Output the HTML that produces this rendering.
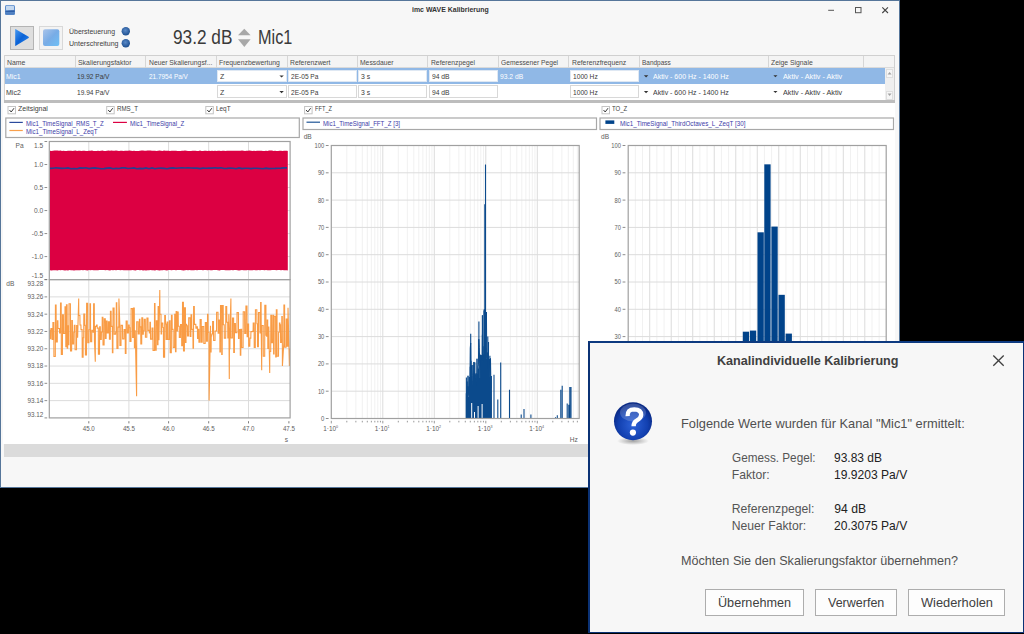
<!DOCTYPE html>
<html><head><meta charset="utf-8"><style>
html,body{margin:0;padding:0;}
body{width:1024px;height:634px;background:#000;position:relative;overflow:hidden;font-family:"Liberation Sans",sans-serif;}
.t{position:absolute;white-space:nowrap;line-height:1;transform-origin:0 0;}
.b{position:absolute;box-sizing:border-box;}
#win{position:absolute;left:0;top:0;width:900px;height:488px;background:#f7f7f7;border:1px solid #56769a;box-sizing:border-box;}
svg text{font-family:"Liberation Sans",sans-serif;}
</style></head><body>
<div id="win"></div>
<div class="b" style="left:3px;top:103px;width:892px;height:341px;background:#fff;"></div>
<div class="b" style="left:4px;top:444.3px;width:891px;height:12.8px;background:#dbdbdb;"></div>
<div class="b" style="left:4.30px;top:55.00px;width:890.40px;height:13.00px;background:#f4f4f4;border-top:1px solid #d0d0d0;border-bottom:1px solid #dadada;"></div>
<div class="b" style="left:74.70px;top:56.00px;width:1.00px;height:12.00px;background:#d6d6d6;"></div>
<div class="b" style="left:145.30px;top:56.00px;width:1.00px;height:12.00px;background:#d6d6d6;"></div>
<div class="b" style="left:215.70px;top:56.00px;width:1.00px;height:12.00px;background:#d6d6d6;"></div>
<div class="b" style="left:286.50px;top:56.00px;width:1.00px;height:12.00px;background:#d6d6d6;"></div>
<div class="b" style="left:356.50px;top:56.00px;width:1.00px;height:12.00px;background:#d6d6d6;"></div>
<div class="b" style="left:427.10px;top:56.00px;width:1.00px;height:12.00px;background:#d6d6d6;"></div>
<div class="b" style="left:497.50px;top:56.00px;width:1.00px;height:12.00px;background:#d6d6d6;"></div>
<div class="b" style="left:568.30px;top:56.00px;width:1.00px;height:12.00px;background:#d6d6d6;"></div>
<div class="b" style="left:639.00px;top:56.00px;width:1.00px;height:12.00px;background:#d6d6d6;"></div>
<div class="b" style="left:768.10px;top:56.00px;width:1.00px;height:12.00px;background:#d6d6d6;"></div>
<div class="b" style="left:862.80px;top:56.00px;width:1.00px;height:12.00px;background:#d6d6d6;"></div>
<div class="b" style="left:4.00px;top:55.00px;width:1.00px;height:45.00px;background:#d4d4d4;"></div>
<div class="b" style="left:894.00px;top:55.00px;width:1.00px;height:45.00px;background:#d0d0d0;"></div>
<div class="b" style="left:5.30px;top:68.00px;width:880.00px;height:15.80px;background:#90b8e6;"></div>
<div class="b" style="left:5.30px;top:83.80px;width:880.00px;height:16.20px;background:#ffffff;"></div>
<div class="b" style="left:4.30px;top:99.80px;width:890.60px;height:3.40px;background:#bdbdbd;"></div>
<div class="b" style="left:885.30px;top:68.00px;width:8.60px;height:31.80px;background:#efefef;"></div>
<div class="b" style="left:885.80px;top:68.50px;width:7.60px;height:9.00px;background:#f6f6f6;border:0.5px solid #dedede;"></div>
<div class="b" style="left:885.80px;top:90.50px;width:7.60px;height:9.00px;background:#f6f6f6;border:0.5px solid #dedede;"></div>
<div class="b" style="left:217.40px;top:69.70px;width:69.20px;height:12.40px;background:#fff;border:1px solid #dfe8f3;box-sizing:border-box;"></div>
<div class="b" style="left:217.40px;top:85.30px;width:69.20px;height:12.40px;background:#fff;border:1px solid #d8d8d8;box-sizing:border-box;"></div>
<div class="b" style="left:288.20px;top:69.70px;width:68.40px;height:12.40px;background:#fff;border:1px solid #dfe8f3;box-sizing:border-box;"></div>
<div class="b" style="left:288.20px;top:85.30px;width:68.40px;height:12.40px;background:#fff;border:1px solid #d8d8d8;box-sizing:border-box;"></div>
<div class="b" style="left:358.20px;top:69.70px;width:69.00px;height:12.40px;background:#fff;border:1px solid #dfe8f3;box-sizing:border-box;"></div>
<div class="b" style="left:358.20px;top:85.30px;width:69.00px;height:12.40px;background:#fff;border:1px solid #d8d8d8;box-sizing:border-box;"></div>
<div class="b" style="left:428.80px;top:69.70px;width:68.80px;height:12.40px;background:#fff;border:1px solid #dfe8f3;box-sizing:border-box;"></div>
<div class="b" style="left:428.80px;top:85.30px;width:68.80px;height:12.40px;background:#fff;border:1px solid #d8d8d8;box-sizing:border-box;"></div>
<div class="b" style="left:570.00px;top:69.70px;width:69.10px;height:12.40px;background:#fff;border:1px solid #dfe8f3;box-sizing:border-box;"></div>
<div class="b" style="left:570.00px;top:85.30px;width:69.10px;height:12.40px;background:#fff;border:1px solid #d8d8d8;box-sizing:border-box;"></div>
<svg width="1024" height="634" style="position:absolute;left:0;top:0">
<!-- app icon -->
<rect x="5" y="5" width="10" height="10" rx="1.6" fill="#5b8ccc"/>
<rect x="6" y="5.8" width="8" height="4.4" rx="0.8" fill="#c4d8ef"/>
<path d="M5.3 11.2 Q9 10.2 14.7 10.6 L14.7 11.8 L5.3 11.8 Z" fill="#1f4f9a"/>
<rect x="5.5" y="12.3" width="9" height="2.2" fill="#4f7fc0"/>
<!-- window controls -->
<line x1="828.2" y1="10.3" x2="834" y2="10.3" stroke="#555" stroke-width="1"/>
<rect x="855.5" y="7.5" width="5.5" height="5.2" fill="none" stroke="#555" stroke-width="1"/>
<path d="M882.3 7.3 L888 13 M888 7.3 L882.3 13" stroke="#444" stroke-width="1.1"/>
<!-- play/stop -->
<defs>
<linearGradient id="pg" x1="0" y1="0" x2="1" y2="1"><stop offset="0" stop-color="#4a9af0"/><stop offset="0.5" stop-color="#0a62d6"/><stop offset="1" stop-color="#2f8af0"/></linearGradient>
<linearGradient id="sg" x1="0" y1="0" x2="1" y2="1"><stop offset="0" stop-color="#aac4ea"/><stop offset="0.5" stop-color="#78ace6"/><stop offset="1" stop-color="#6ec0f6"/></linearGradient>
<radialGradient id="led" cx="0.45" cy="0.4" r="0.6"><stop offset="0" stop-color="#5a8ac8"/><stop offset="1" stop-color="#1d4f90"/></radialGradient>
</defs>
<rect x="10.5" y="26.5" width="23" height="23" fill="#dedede" stroke="#b4b4b4" stroke-width="1"/>
<path d="M15.2 30 Q14.5 29 15.8 29.3 L28.6 36.8 Q29.3 37.5 28.6 38.1 L15.8 45.7 Q14.5 46 15.2 45 Z" fill="url(#pg)"/>
<rect x="39.5" y="26.5" width="23" height="23" fill="#f3f3f3" stroke="#d8d8d8" stroke-width="1"/>
<rect x="43" y="29.2" width="16.3" height="16.8" rx="2" fill="url(#sg)"/>
<circle cx="125.8" cy="31.2" r="4.2" fill="url(#led)"/>
<circle cx="125.8" cy="43.2" r="4.2" fill="url(#led)"/>
<!-- up/down arrows -->
<polygon points="238,35.3 244.3,28.8 250.6,35.3" fill="#a8a8a8"/>
<polygon points="238,39.2 250.6,39.2 244.3,47" fill="#a8a8a8"/>
<polygon points="279.4,75.4 283.8,75.4 281.6,77.6" fill="#333"/><polygon points="279.4,91.0 283.8,91.0 281.6,93.2" fill="#333"/><polygon points="643.9,75.2 648.3,75.2 646.1,77.4" fill="#333"/><polygon points="643.9,91.0 648.3,91.0 646.1,93.2" fill="#333"/><polygon points="773.4,75.2 777.5,75.2 775.4,77.2" fill="#333"/><polygon points="773.4,91.0 777.5,91.0 775.4,93.0" fill="#333"/><polygon points="887.6,74.5 889.6,72 891.6,74.5" fill="#a0a0a0"/><polygon points="887.6,93.5 889.6,96 891.6,93.5" fill="#a0a0a0"/>
<!-- checkboxes -->
<rect x="8.0" y="106.5" width="7.5" height="7.3" fill="#fff" stroke="#c4c4c4" stroke-width="1"/><path d="M9.5 110 L11.2 112 L14.0 108.2" fill="none" stroke="#3a3a3a" stroke-width="1"/>
<rect x="106.7" y="106.5" width="7.5" height="7.3" fill="#fff" stroke="#c4c4c4" stroke-width="1"/><path d="M108.2 110 L109.9 112 L112.7 108.2" fill="none" stroke="#3a3a3a" stroke-width="1"/>
<rect x="205.8" y="106.5" width="7.5" height="7.3" fill="#fff" stroke="#c4c4c4" stroke-width="1"/><path d="M207.3 110 L209.0 112 L211.8 108.2" fill="none" stroke="#3a3a3a" stroke-width="1"/>
<rect x="304.6" y="106.5" width="7.5" height="7.3" fill="#fff" stroke="#c4c4c4" stroke-width="1"/><path d="M306.1 110 L307.8 112 L310.6 108.2" fill="none" stroke="#3a3a3a" stroke-width="1"/>
<rect x="602.0" y="106.5" width="7.5" height="7.3" fill="#fff" stroke="#c4c4c4" stroke-width="1"/><path d="M603.5 110 L605.2 112 L608.0 108.2" fill="none" stroke="#3a3a3a" stroke-width="1"/>

<!-- legend boxes -->
<rect x="5.8" y="118" width="293.5" height="19.5" fill="#fff" stroke="#a8a8a8" stroke-width="1.2"/>
<rect x="303" y="118" width="293.5" height="11.5" fill="#fff" stroke="#a8a8a8" stroke-width="1.2"/>
<rect x="600" y="118" width="293.5" height="11.5" fill="#fff" stroke="#a8a8a8" stroke-width="1.2"/>
<line x1="9.4" y1="122.4" x2="22.8" y2="122.4" stroke="#2b4a9c" stroke-width="1.2"/>
<line x1="9.4" y1="130.5" x2="22.8" y2="130.5" stroke="#f9a04c" stroke-width="1.2"/>
<line x1="113" y1="122.4" x2="126.9" y2="122.4" stroke="#dc0042" stroke-width="1.2"/>
<line x1="306.5" y1="122.2" x2="320" y2="122.2" stroke="#1f5596" stroke-width="1.2"/>
<rect x="605.4" y="120.4" width="8.9" height="3.5" fill="#00438a"/>
<line x1="88.80" y1="141.50" x2="88.80" y2="417.90" stroke="#dcdcdc" stroke-width="1"/>
<line x1="128.90" y1="141.50" x2="128.90" y2="417.90" stroke="#dcdcdc" stroke-width="1"/>
<line x1="168.60" y1="141.50" x2="168.60" y2="417.90" stroke="#dcdcdc" stroke-width="1"/>
<line x1="208.70" y1="141.50" x2="208.70" y2="417.90" stroke="#dcdcdc" stroke-width="1"/>
<line x1="248.50" y1="141.50" x2="248.50" y2="417.90" stroke="#dcdcdc" stroke-width="1"/>
<line x1="49.30" y1="164.52" x2="290.10" y2="164.52" stroke="#dcdcdc" stroke-width="1"/>
<line x1="49.30" y1="187.53" x2="290.10" y2="187.53" stroke="#dcdcdc" stroke-width="1"/>
<line x1="49.30" y1="210.55" x2="290.10" y2="210.55" stroke="#dcdcdc" stroke-width="1"/>
<line x1="49.30" y1="233.57" x2="290.10" y2="233.57" stroke="#dcdcdc" stroke-width="1"/>
<line x1="49.30" y1="256.58" x2="290.10" y2="256.58" stroke="#dcdcdc" stroke-width="1"/>
<line x1="49.30" y1="296.89" x2="290.10" y2="296.89" stroke="#dcdcdc" stroke-width="1"/>
<line x1="49.30" y1="314.18" x2="290.10" y2="314.18" stroke="#dcdcdc" stroke-width="1"/>
<line x1="49.30" y1="331.46" x2="290.10" y2="331.46" stroke="#dcdcdc" stroke-width="1"/>
<line x1="49.30" y1="348.75" x2="290.10" y2="348.75" stroke="#dcdcdc" stroke-width="1"/>
<line x1="49.30" y1="366.04" x2="290.10" y2="366.04" stroke="#dcdcdc" stroke-width="1"/>
<line x1="49.30" y1="383.32" x2="290.10" y2="383.32" stroke="#dcdcdc" stroke-width="1"/>
<line x1="49.30" y1="400.61" x2="290.10" y2="400.61" stroke="#dcdcdc" stroke-width="1"/>
<polygon points="50.0,150.7 51.5,150.9 53.0,150.8 54.5,150.6 56.0,150.6 57.5,150.6 59.0,150.8 60.5,150.6 62.0,150.9 63.5,150.8 65.0,151.0 66.5,150.9 68.0,150.7 69.5,150.7 71.0,150.7 72.5,150.9 74.0,150.8 75.5,150.6 77.0,150.9 78.5,150.7 80.0,150.8 81.5,150.9 83.0,150.7 84.5,150.8 86.0,150.9 87.5,151.0 89.0,150.8 90.5,150.7 92.0,150.6 93.5,150.9 95.0,151.0 96.5,150.9 98.0,150.8 99.5,150.9 101.0,150.8 102.5,150.6 104.0,150.9 105.5,150.9 107.0,150.8 108.5,150.6 110.0,150.7 111.5,150.6 113.0,150.7 114.5,150.8 116.0,150.6 117.5,150.8 119.0,150.9 120.5,150.7 122.0,150.7 123.5,151.0 125.0,150.7 126.5,150.7 128.0,150.8 129.5,150.6 131.0,150.7 132.5,151.0 134.0,150.8 135.5,150.9 137.0,151.0 138.5,150.9 140.0,150.8 141.5,150.6 143.0,150.6 144.5,150.7 146.0,150.7 147.5,150.6 149.0,150.6 150.5,150.6 152.0,150.8 153.5,150.7 155.0,150.7 156.5,150.9 158.0,150.8 159.5,150.6 161.0,150.7 162.5,150.9 164.0,150.6 165.5,150.8 167.0,150.8 168.5,150.8 170.0,150.9 171.5,150.7 173.0,150.7 174.5,150.8 176.0,150.7 177.5,150.9 179.0,150.9 180.5,150.9 182.0,150.7 183.5,150.7 185.0,150.6 186.5,150.7 188.0,151.0 189.5,151.0 191.0,151.0 192.5,150.7 194.0,150.7 195.5,150.8 197.0,150.9 198.5,150.9 200.0,150.6 201.5,151.0 203.0,150.9 204.5,150.7 206.0,150.7 207.5,151.0 209.0,150.8 210.5,150.9 212.0,150.7 213.5,151.0 215.0,150.7 216.5,151.0 218.0,150.7 219.5,150.7 221.0,151.0 222.5,150.8 224.0,150.8 225.5,150.9 227.0,150.7 228.5,150.7 230.0,150.7 231.5,150.7 233.0,150.7 234.5,150.8 236.0,150.8 237.5,150.8 239.0,150.8 240.5,150.8 242.0,150.6 243.5,150.7 245.0,150.9 246.5,150.7 248.0,150.8 249.5,150.6 251.0,150.7 252.5,150.9 254.0,150.8 255.5,151.0 257.0,150.8 258.5,150.8 260.0,150.8 261.5,150.8 263.0,150.9 264.5,151.0 266.0,150.8 267.5,150.9 269.0,150.6 270.5,150.6 272.0,150.6 273.5,150.9 275.0,150.7 276.5,150.9 278.0,151.0 279.5,150.7 281.0,150.8 282.5,151.0 284.0,150.7 285.5,150.8 287.0,150.7 287.8,150.9 287.8,270.4 287.0,270.3 285.5,270.3 284.0,270.2 282.5,270.1 281.0,270.2 279.5,270.0 278.0,270.0 276.5,270.3 275.0,270.1 273.5,270.0 272.0,270.1 270.5,270.3 269.0,270.2 267.5,270.3 266.0,270.0 264.5,270.3 263.0,270.0 261.5,270.0 260.0,270.2 258.5,270.1 257.0,270.2 255.5,270.2 254.0,270.1 252.5,270.2 251.0,270.3 249.5,270.2 248.0,270.1 246.5,270.2 245.0,270.2 243.5,270.2 242.0,270.1 240.5,270.3 239.0,270.4 237.5,270.2 236.0,270.0 234.5,270.0 233.0,270.2 231.5,270.0 230.0,270.2 228.5,270.2 227.0,270.3 225.5,270.3 224.0,270.1 222.5,270.0 221.0,270.1 219.5,270.4 218.0,270.2 216.5,270.1 215.0,270.1 213.5,270.1 212.0,270.3 210.5,270.3 209.0,270.0 207.5,270.2 206.0,270.1 204.5,270.1 203.0,270.2 201.5,270.1 200.0,270.1 198.5,270.1 197.0,270.2 195.5,270.0 194.0,270.3 192.5,270.3 191.0,270.3 189.5,270.0 188.0,270.2 186.5,270.1 185.0,270.3 183.5,270.4 182.0,270.2 180.5,270.1 179.0,270.1 177.5,270.0 176.0,270.3 174.5,270.1 173.0,270.1 171.5,270.3 170.0,270.1 168.5,270.0 167.0,270.4 165.5,270.3 164.0,270.0 162.5,270.3 161.0,270.3 159.5,270.4 158.0,270.2 156.5,270.0 155.0,270.4 153.5,270.3 152.0,270.3 150.5,270.1 149.0,270.3 147.5,270.3 146.0,270.4 144.5,270.3 143.0,270.4 141.5,270.1 140.0,270.2 138.5,270.1 137.0,270.1 135.5,270.4 134.0,270.2 132.5,270.1 131.0,270.2 129.5,270.2 128.0,270.3 126.5,270.2 125.0,270.3 123.5,270.3 122.0,270.0 120.5,270.2 119.0,270.1 117.5,270.0 116.0,270.2 114.5,270.1 113.0,270.3 111.5,270.1 110.0,270.4 108.5,270.2 107.0,270.1 105.5,270.3 104.0,270.0 102.5,270.1 101.0,270.1 99.5,270.0 98.0,270.2 96.5,270.2 95.0,270.3 93.5,270.2 92.0,270.1 90.5,270.2 89.0,270.1 87.5,270.4 86.0,270.3 84.5,270.0 83.0,270.2 81.5,270.1 80.0,270.3 78.5,270.2 77.0,270.2 75.5,270.3 74.0,270.4 72.5,270.3 71.0,270.2 69.5,270.1 68.0,270.4 66.5,270.3 65.0,270.4 63.5,270.2 62.0,270.0 60.5,270.3 59.0,270.1 57.5,270.4 56.0,270.2 54.5,270.2 53.0,270.3 51.5,270.4 50.0,270.3" fill="#dc0042"/>
<polyline fill="none" stroke="#283f90" stroke-width="1.6" points="50.0,168.4 53.0,168.2 56.0,167.8 59.0,168.1 62.0,168.4 65.0,168.3 68.0,167.9 71.0,168.8 74.0,168.6 77.0,168.8 80.0,167.9 83.0,168.1 86.0,167.8 89.0,168.6 92.0,168.1 95.0,167.9 98.0,168.2 101.0,168.7 104.0,168.6 107.0,168.1 110.0,167.9 113.0,168.7 116.0,168.4 119.0,168.5 122.0,167.9 125.0,167.9 128.0,168.5 131.0,168.2 134.0,167.9 137.0,168.7 140.0,168.4 143.0,168.6 146.0,167.9 149.0,168.7 152.0,167.9 155.0,168.7 158.0,168.3 161.0,168.1 164.0,168.4 167.0,168.7 170.0,168.1 173.0,167.9 176.0,168.3 179.0,168.0 182.0,167.9 185.0,168.0 188.0,167.9 191.0,168.0 194.0,168.1 197.0,168.1 200.0,168.6 203.0,168.1 206.0,168.3 209.0,168.0 212.0,168.1 215.0,167.8 218.0,168.1 221.0,167.8 224.0,168.5 227.0,168.4 230.0,168.0 233.0,168.3 236.0,168.7 239.0,167.9 242.0,168.6 245.0,168.2 248.0,168.3 251.0,168.6 254.0,168.2 257.0,168.3 260.0,168.5 263.0,168.8 266.0,168.1 269.0,168.6 272.0,168.5 275.0,168.4 278.0,168.2 281.0,168.1 284.0,167.9 287.0,167.9"/>
<polyline fill="none" stroke="#f99c45" stroke-width="1.1" points="50.00,329.73 50.12,338.73 50.80,338.73 50.92,328.59 52.00,328.59 52.12,339.39 52.80,339.39 52.92,322.49 53.80,322.49 53.92,356.44 55.30,356.44 55.42,305.02 56.10,305.02 56.22,341.89 57.30,341.89 57.42,320.92 57.90,320.92 58.02,328.49 59.40,328.49 59.52,333.04 60.40,333.04 60.52,303.14 61.20,303.14 61.32,354.36 62.40,354.36 62.52,314.75 63.40,314.75 63.52,333.42 64.90,333.42 65.02,306.78 65.70,306.78 65.82,346.58 66.30,346.58 66.42,304.76 67.10,304.76 67.22,348.30 67.70,348.30 67.82,325.87 68.30,325.87 68.42,344.59 68.90,344.59 69.02,303.77 70.40,303.77 70.52,351.02 71.60,351.02 71.72,320.48 72.40,320.48 72.52,343.87 73.60,343.87 73.72,332.22 74.20,332.22 74.32,325.20 75.00,325.20 75.12,349.70 76.50,349.70 76.62,325.62 77.50,325.62 77.62,337.78 78.70,298.62 78.82,315.49 79.90,315.49 80.02,324.99 80.90,324.99 81.02,329.58 82.10,329.58 82.22,357.26 83.10,357.26 83.22,337.78 83.70,337.78 83.82,314.00 84.70,314.00 84.82,325.34 85.30,325.34 85.42,354.83 86.50,354.83 86.62,303.33 87.70,303.33 87.82,342.76 88.90,342.76 89.02,329.75 89.90,329.75 90.02,303.92 90.50,303.92 90.62,341.66 91.70,341.66 91.82,330.39 92.90,330.39 93.02,332.16 93.50,332.16 93.62,303.69 94.30,303.69 94.42,340.24 95.30,361.72 95.42,326.41 96.50,326.41 96.62,324.99 97.10,324.99 97.22,328.13 98.30,328.13 98.42,354.12 99.50,354.12 99.62,326.78 100.30,326.78 100.42,339.39 101.30,339.39 101.42,331.98 102.10,331.98 102.22,317.26 102.90,317.26 103.02,344.88 104.10,344.88 104.22,318.80 105.30,318.80 105.42,338.45 106.10,338.45 106.22,321.15 107.10,321.15 107.22,332.83 108.30,332.83 108.42,321.88 109.30,321.88 109.42,339.28 110.30,339.28 110.42,311.36 111.10,311.36 111.22,326.41 112.30,326.41 112.42,352.74 112.90,352.74 113.02,308.00 114.10,308.00 114.22,334.16 115.60,334.16 115.72,331.88 116.20,331.88 116.32,302.78 116.80,302.78 116.92,348.55 118.00,348.55 118.12,327.11 118.80,327.11 118.92,298.62 119.80,324.15 119.92,345.57 121.00,345.57 121.12,325.38 122.50,325.38 122.62,338.87 124.00,338.87 124.12,329.47 125.20,329.47 125.32,353.37 126.00,353.37 126.12,320.95 127.20,320.95 127.32,332.87 128.40,332.87 128.52,325.11 129.20,325.11 129.32,327.77 129.80,327.77 129.92,341.41 131.00,341.41 131.12,308.61 132.50,308.61 132.62,337.35 133.30,337.35 133.42,308.08 134.30,308.08 134.42,347.62 135.10,347.62 135.22,330.22 136.60,396.29 136.72,321.80 138.10,321.80 138.22,333.83 139.30,333.83 139.42,319.26 139.90,319.26 140.02,326.89 140.70,326.89 140.82,344.05 141.70,344.05 141.82,317.77 142.70,317.77 142.82,334.29 143.30,334.29 143.42,330.80 144.10,330.80 144.22,319.40 145.30,319.40 145.42,337.23 146.80,337.23 146.92,318.01 148.00,318.01 148.12,330.35 149.20,330.35 149.32,332.95 149.80,332.95 149.92,322.25 150.40,322.25 150.52,339.15 151.90,339.15 152.02,328.03 152.90,328.03 153.02,350.41 154.40,350.41 154.52,303.50 155.00,303.50 155.12,350.26 156.20,350.26 156.32,320.85 157.40,320.85 157.52,344.77 158.00,344.77 158.12,306.52 158.80,306.52 158.92,340.34 159.80,289.97 159.92,314.31 161.00,314.31 161.12,333.95 161.60,333.95 161.72,323.11 162.80,323.11 162.92,327.44 163.40,327.44 163.52,357.10 164.60,357.10 164.72,315.59 165.40,315.59 165.52,323.99 166.00,323.99 166.12,339.33 167.00,339.33 167.12,322.15 167.80,322.15 167.92,339.38 169.30,339.38 169.42,320.83 170.10,320.83 170.22,352.59 171.30,352.59 171.42,315.24 172.10,315.24 172.22,329.38 173.10,329.38 173.22,347.38 174.60,347.38 174.72,314.29 175.40,314.29 175.52,351.82 176.00,351.82 176.12,311.60 176.80,311.60 176.92,330.84 177.40,330.84 177.52,312.11 178.20,312.11 178.32,326.20 179.20,326.20 179.32,337.43 180.40,337.43 180.52,324.60 181.60,324.60 181.72,345.71 182.40,345.71 182.52,302.37 183.40,302.37 183.52,351.01 184.40,351.01 184.52,307.92 185.40,307.92 185.52,342.48 186.00,342.48 186.12,324.29 186.60,324.29 186.72,325.75 187.40,325.75 187.52,335.90 188.60,335.90 188.72,317.84 190.10,317.84 190.22,336.38 190.90,336.38 191.02,314.85 191.70,314.85 191.82,329.36 192.90,329.36 193.02,348.28 193.50,348.28 193.62,306.47 194.30,306.47 194.42,324.37 195.80,324.37 195.92,328.15 196.60,328.15 196.72,326.70 197.40,326.70 197.52,338.52 198.20,338.52 198.32,329.30 198.80,329.30 198.92,342.10 200.00,342.10 200.12,319.46 201.20,319.46 201.32,342.08 202.20,342.08 202.32,326.55 203.70,326.55 203.82,343.53 205.20,343.53 205.32,322.64 206.40,322.64 206.52,341.32 207.40,341.32 207.52,314.35 208.00,314.35 208.12,332.29 209.00,332.29 209.12,400.61 210.50,325.78 210.62,351.99 211.10,351.99 211.22,336.06 211.70,336.06 211.82,333.99 212.50,333.99 212.62,321.60 213.50,321.60 213.62,340.44 215.00,340.44 215.12,330.97 216.50,330.97 216.62,312.30 218.00,312.30 218.12,333.25 218.80,333.25 218.92,320.17 219.80,320.17 219.92,352.00 220.40,352.00 220.52,305.63 221.60,305.63 221.72,354.45 222.20,354.45 222.32,305.67 223.20,305.67 223.32,324.74 224.20,324.74 224.32,338.09 225.70,338.09 225.82,306.59 226.70,306.59 226.82,322.21 227.70,322.21 227.82,337.88 228.70,337.88 228.82,314.29 229.30,379.00 229.42,348.70 229.90,348.70 230.02,329.27 230.90,298.62 231.02,337.95 232.40,337.95 232.52,317.96 233.60,317.96 233.72,352.42 234.40,352.42 234.52,323.51 235.40,323.51 235.52,332.62 236.90,332.62 237.02,312.64 238.40,312.64 238.52,338.56 239.00,338.56 239.12,329.52 240.20,329.52 240.32,355.18 240.80,355.18 240.92,329.38 241.60,329.38 241.72,347.57 243.10,347.57 243.22,311.77 244.60,311.77 244.72,333.54 245.80,333.54 245.92,305.97 247.00,305.97 247.12,336.72 247.60,336.72 247.72,324.05 248.60,324.05 248.72,346.21 249.80,346.21 249.92,338.13 250.80,338.13 250.92,331.61 252.30,331.61 252.42,331.39 253.10,331.39 253.22,323.15 254.10,323.15 254.22,347.40 255.30,347.40 255.42,309.77 256.80,309.77 256.92,323.70 257.40,323.70 257.52,346.62 258.40,346.62 258.52,312.47 259.90,312.47 260.02,333.00 260.50,333.00 260.62,302.64 261.10,302.64 261.22,332.23 261.70,370.36 261.82,325.49 263.20,325.49 263.32,356.25 264.70,356.25 264.82,305.39 265.90,305.39 266.02,335.13 266.50,335.13 266.62,336.25 267.10,336.25 267.22,319.94 267.70,319.94 267.82,348.53 268.70,348.53 268.82,326.62 269.70,372.95 269.82,351.37 270.70,351.37 270.82,315.21 271.70,315.21 271.82,342.68 272.90,342.68 273.02,315.39 273.50,315.39 273.62,353.94 274.10,353.94 274.22,316.21 275.60,316.21 275.72,356.84 276.20,356.84 276.32,309.71 277.00,309.71 277.12,356.32 278.50,356.32 278.62,332.19 279.30,332.19 279.42,322.98 279.90,322.98 280.02,324.88 280.50,324.88 280.62,342.39 281.70,342.39 281.82,316.56 282.30,316.56 282.42,366.04 283.80,343.06 283.92,304.98 284.60,304.98 284.72,347.22 286.10,347.22 286.22,318.95 286.90,318.95 287.02,346.21 287.90,346.21 288.02,307.75 289.40,366.04 289.52,348.44"/>
<rect x="49.30" y="141.50" width="240.80" height="138.10" fill="none" stroke="#a0a0a0" stroke-width="1.2"/>
<rect x="49.30" y="279.60" width="240.80" height="138.30" fill="none" stroke="#a0a0a0" stroke-width="1.2"/>
<text x="43.20" y="147.70" font-size="6.6" fill="#606060" text-anchor="end">1.5</text>
<line x1="44.50" y1="141.50" x2="47.20" y2="141.50" stroke="#707070" stroke-width="0.8"/>
<text x="43.20" y="166.92" font-size="6.6" fill="#606060" text-anchor="end">1.0</text>
<line x1="44.50" y1="164.52" x2="47.20" y2="164.52" stroke="#707070" stroke-width="0.8"/>
<text x="43.20" y="189.93" font-size="6.6" fill="#606060" text-anchor="end">0.5</text>
<line x1="44.50" y1="187.53" x2="47.20" y2="187.53" stroke="#707070" stroke-width="0.8"/>
<text x="43.20" y="212.95" font-size="6.6" fill="#606060" text-anchor="end">0.0</text>
<line x1="44.50" y1="210.55" x2="47.20" y2="210.55" stroke="#707070" stroke-width="0.8"/>
<text x="43.20" y="235.97" font-size="6.6" fill="#606060" text-anchor="end">-0.5</text>
<line x1="44.50" y1="233.57" x2="47.20" y2="233.57" stroke="#707070" stroke-width="0.8"/>
<text x="43.20" y="258.98" font-size="6.6" fill="#606060" text-anchor="end">-1.0</text>
<line x1="44.50" y1="256.58" x2="47.20" y2="256.58" stroke="#707070" stroke-width="0.8"/>
<text x="43.20" y="277.90" font-size="6.6" fill="#606060" text-anchor="end">-1.5</text>
<line x1="44.50" y1="279.60" x2="47.20" y2="279.60" stroke="#707070" stroke-width="0.8"/>
<text x="43.20" y="285.80" font-size="6.6" fill="#606060" text-anchor="end" textLength="15.8" lengthAdjust="spacingAndGlyphs">93.28</text>
<line x1="44.50" y1="279.60" x2="47.20" y2="279.60" stroke="#707070" stroke-width="0.8"/>
<text x="43.20" y="299.29" font-size="6.6" fill="#606060" text-anchor="end" textLength="15.8" lengthAdjust="spacingAndGlyphs">93.26</text>
<line x1="44.50" y1="296.89" x2="47.20" y2="296.89" stroke="#707070" stroke-width="0.8"/>
<text x="43.20" y="316.57" font-size="6.6" fill="#606060" text-anchor="end" textLength="15.8" lengthAdjust="spacingAndGlyphs">93.24</text>
<line x1="44.50" y1="314.18" x2="47.20" y2="314.18" stroke="#707070" stroke-width="0.8"/>
<text x="43.20" y="333.86" font-size="6.6" fill="#606060" text-anchor="end" textLength="15.8" lengthAdjust="spacingAndGlyphs">93.22</text>
<line x1="44.50" y1="331.46" x2="47.20" y2="331.46" stroke="#707070" stroke-width="0.8"/>
<text x="43.20" y="351.15" font-size="6.6" fill="#606060" text-anchor="end" textLength="15.8" lengthAdjust="spacingAndGlyphs">93.20</text>
<line x1="44.50" y1="348.75" x2="47.20" y2="348.75" stroke="#707070" stroke-width="0.8"/>
<text x="43.20" y="368.44" font-size="6.6" fill="#606060" text-anchor="end" textLength="15.8" lengthAdjust="spacingAndGlyphs">93.18</text>
<line x1="44.50" y1="366.04" x2="47.20" y2="366.04" stroke="#707070" stroke-width="0.8"/>
<text x="43.20" y="385.72" font-size="6.6" fill="#606060" text-anchor="end" textLength="15.8" lengthAdjust="spacingAndGlyphs">93.16</text>
<line x1="44.50" y1="383.32" x2="47.20" y2="383.32" stroke="#707070" stroke-width="0.8"/>
<text x="43.20" y="403.01" font-size="6.6" fill="#606060" text-anchor="end" textLength="15.8" lengthAdjust="spacingAndGlyphs">93.14</text>
<line x1="44.50" y1="400.61" x2="47.20" y2="400.61" stroke="#707070" stroke-width="0.8"/>
<text x="43.20" y="416.70" font-size="6.6" fill="#606060" text-anchor="end" textLength="15.8" lengthAdjust="spacingAndGlyphs">93.12</text>
<line x1="44.50" y1="417.90" x2="47.20" y2="417.90" stroke="#707070" stroke-width="0.8"/>
<text x="15.50" y="147.80" font-size="6.6" fill="#606060" text-anchor="start">Pa</text>
<text x="6.30" y="285.80" font-size="6.6" fill="#606060" text-anchor="start">dB</text>
<line x1="88.80" y1="421.20" x2="88.80" y2="423.40" stroke="#707070" stroke-width="0.9"/>
<text x="88.80" y="431.40" font-size="6.6" fill="#606060" text-anchor="middle" textLength="12" lengthAdjust="spacingAndGlyphs">45.0</text>
<line x1="128.90" y1="421.20" x2="128.90" y2="423.40" stroke="#707070" stroke-width="0.9"/>
<text x="128.90" y="431.40" font-size="6.6" fill="#606060" text-anchor="middle" textLength="12" lengthAdjust="spacingAndGlyphs">45.5</text>
<line x1="168.60" y1="421.20" x2="168.60" y2="423.40" stroke="#707070" stroke-width="0.9"/>
<text x="168.60" y="431.40" font-size="6.6" fill="#606060" text-anchor="middle" textLength="12" lengthAdjust="spacingAndGlyphs">46.0</text>
<line x1="208.70" y1="421.20" x2="208.70" y2="423.40" stroke="#707070" stroke-width="0.9"/>
<text x="208.70" y="431.40" font-size="6.6" fill="#606060" text-anchor="middle" textLength="12" lengthAdjust="spacingAndGlyphs">46.5</text>
<line x1="248.50" y1="421.20" x2="248.50" y2="423.40" stroke="#707070" stroke-width="0.9"/>
<text x="248.50" y="431.40" font-size="6.6" fill="#606060" text-anchor="middle" textLength="12" lengthAdjust="spacingAndGlyphs">47.0</text>
<line x1="288.90" y1="421.20" x2="288.90" y2="423.40" stroke="#707070" stroke-width="0.9"/>
<text x="288.90" y="431.40" font-size="6.6" fill="#606060" text-anchor="middle" textLength="12" lengthAdjust="spacingAndGlyphs">47.5</text>
<text x="286.30" y="442.20" font-size="6.6" fill="#606060" text-anchor="middle">s</text>
<line x1="346.80" y1="145.50" x2="346.80" y2="418.50" stroke="#f1f1f1" stroke-width="1"/>
<line x1="355.87" y1="145.50" x2="355.87" y2="418.50" stroke="#f1f1f1" stroke-width="1"/>
<line x1="362.31" y1="145.50" x2="362.31" y2="418.50" stroke="#f1f1f1" stroke-width="1"/>
<line x1="367.30" y1="145.50" x2="367.30" y2="418.50" stroke="#f1f1f1" stroke-width="1"/>
<line x1="371.37" y1="145.50" x2="371.37" y2="418.50" stroke="#f1f1f1" stroke-width="1"/>
<line x1="374.82" y1="145.50" x2="374.82" y2="418.50" stroke="#f1f1f1" stroke-width="1"/>
<line x1="377.81" y1="145.50" x2="377.81" y2="418.50" stroke="#f1f1f1" stroke-width="1"/>
<line x1="380.44" y1="145.50" x2="380.44" y2="418.50" stroke="#f1f1f1" stroke-width="1"/>
<line x1="398.30" y1="145.50" x2="398.30" y2="418.50" stroke="#f1f1f1" stroke-width="1"/>
<line x1="407.37" y1="145.50" x2="407.37" y2="418.50" stroke="#f1f1f1" stroke-width="1"/>
<line x1="413.81" y1="145.50" x2="413.81" y2="418.50" stroke="#f1f1f1" stroke-width="1"/>
<line x1="418.80" y1="145.50" x2="418.80" y2="418.50" stroke="#f1f1f1" stroke-width="1"/>
<line x1="422.87" y1="145.50" x2="422.87" y2="418.50" stroke="#f1f1f1" stroke-width="1"/>
<line x1="426.32" y1="145.50" x2="426.32" y2="418.50" stroke="#f1f1f1" stroke-width="1"/>
<line x1="429.31" y1="145.50" x2="429.31" y2="418.50" stroke="#f1f1f1" stroke-width="1"/>
<line x1="431.94" y1="145.50" x2="431.94" y2="418.50" stroke="#f1f1f1" stroke-width="1"/>
<line x1="449.80" y1="145.50" x2="449.80" y2="418.50" stroke="#f1f1f1" stroke-width="1"/>
<line x1="458.87" y1="145.50" x2="458.87" y2="418.50" stroke="#f1f1f1" stroke-width="1"/>
<line x1="465.31" y1="145.50" x2="465.31" y2="418.50" stroke="#f1f1f1" stroke-width="1"/>
<line x1="470.30" y1="145.50" x2="470.30" y2="418.50" stroke="#f1f1f1" stroke-width="1"/>
<line x1="474.37" y1="145.50" x2="474.37" y2="418.50" stroke="#f1f1f1" stroke-width="1"/>
<line x1="477.82" y1="145.50" x2="477.82" y2="418.50" stroke="#f1f1f1" stroke-width="1"/>
<line x1="480.81" y1="145.50" x2="480.81" y2="418.50" stroke="#f1f1f1" stroke-width="1"/>
<line x1="483.44" y1="145.50" x2="483.44" y2="418.50" stroke="#f1f1f1" stroke-width="1"/>
<line x1="501.30" y1="145.50" x2="501.30" y2="418.50" stroke="#f1f1f1" stroke-width="1"/>
<line x1="510.37" y1="145.50" x2="510.37" y2="418.50" stroke="#f1f1f1" stroke-width="1"/>
<line x1="516.81" y1="145.50" x2="516.81" y2="418.50" stroke="#f1f1f1" stroke-width="1"/>
<line x1="521.80" y1="145.50" x2="521.80" y2="418.50" stroke="#f1f1f1" stroke-width="1"/>
<line x1="525.87" y1="145.50" x2="525.87" y2="418.50" stroke="#f1f1f1" stroke-width="1"/>
<line x1="529.32" y1="145.50" x2="529.32" y2="418.50" stroke="#f1f1f1" stroke-width="1"/>
<line x1="532.31" y1="145.50" x2="532.31" y2="418.50" stroke="#f1f1f1" stroke-width="1"/>
<line x1="534.94" y1="145.50" x2="534.94" y2="418.50" stroke="#f1f1f1" stroke-width="1"/>
<line x1="552.80" y1="145.50" x2="552.80" y2="418.50" stroke="#f1f1f1" stroke-width="1"/>
<line x1="561.87" y1="145.50" x2="561.87" y2="418.50" stroke="#f1f1f1" stroke-width="1"/>
<line x1="568.31" y1="145.50" x2="568.31" y2="418.50" stroke="#f1f1f1" stroke-width="1"/>
<line x1="573.30" y1="145.50" x2="573.30" y2="418.50" stroke="#f1f1f1" stroke-width="1"/>
<line x1="577.37" y1="145.50" x2="577.37" y2="418.50" stroke="#f1f1f1" stroke-width="1"/>
<line x1="382.80" y1="145.50" x2="382.80" y2="418.50" stroke="#dcdcdc" stroke-width="1"/>
<line x1="434.30" y1="145.50" x2="434.30" y2="418.50" stroke="#dcdcdc" stroke-width="1"/>
<line x1="485.80" y1="145.50" x2="485.80" y2="418.50" stroke="#dcdcdc" stroke-width="1"/>
<line x1="537.30" y1="145.50" x2="537.30" y2="418.50" stroke="#dcdcdc" stroke-width="1"/>
<line x1="331.30" y1="391.20" x2="579.20" y2="391.20" stroke="#dcdcdc" stroke-width="1"/>
<line x1="331.30" y1="363.90" x2="579.20" y2="363.90" stroke="#dcdcdc" stroke-width="1"/>
<line x1="331.30" y1="336.60" x2="579.20" y2="336.60" stroke="#dcdcdc" stroke-width="1"/>
<line x1="331.30" y1="309.30" x2="579.20" y2="309.30" stroke="#dcdcdc" stroke-width="1"/>
<line x1="331.30" y1="282.00" x2="579.20" y2="282.00" stroke="#dcdcdc" stroke-width="1"/>
<line x1="331.30" y1="254.70" x2="579.20" y2="254.70" stroke="#dcdcdc" stroke-width="1"/>
<line x1="331.30" y1="227.40" x2="579.20" y2="227.40" stroke="#dcdcdc" stroke-width="1"/>
<line x1="331.30" y1="200.10" x2="579.20" y2="200.10" stroke="#dcdcdc" stroke-width="1"/>
<line x1="331.30" y1="172.80" x2="579.20" y2="172.80" stroke="#dcdcdc" stroke-width="1"/>
<polyline fill="none" stroke="#0b4a8c" stroke-width="1" points="466.20,399.13 466.65,399.33 467.10,381.50 467.55,403.95 468.00,375.77 468.45,390.97 468.90,395.58 469.35,377.06 469.80,400.15 470.25,348.07 470.70,343.00 471.15,381.50 471.60,365.39 472.05,375.46 472.50,400.79 472.95,364.95 473.40,386.85 473.85,361.97 474.30,393.73 474.75,362.43 475.20,394.10 475.65,397.70 476.10,373.26 476.55,388.57 477.00,358.75 477.45,396.41 477.90,366.22 478.35,364.76 478.80,339.20 479.25,347.74 479.70,363.40 480.15,390.56 480.60,354.78 481.05,388.12 481.50,355.28 481.95,391.61 482.40,315.27 482.85,361.52 483.30,354.61 483.75,371.93 484.20,310.52 484.65,377.32 485.10,376.13 485.55,339.81 486.00,357.82 486.45,312.01 486.90,376.92 487.35,352.56 487.80,388.44 488.25,358.79 488.70,389.95 489.15,376.14 489.60,359.11 490.05,391.79 490.50,358.45 490.95,387.20 491.40,387.80"/>
<path fill="none" stroke="#0b4a8c" stroke-width="1.1" d="M466.20 418.50V393.32M466.65 418.50V392.53M467.10 418.50V396.19M467.55 418.50V386.24M468.00 418.50V396.67M468.45 418.50V396.99M468.90 418.50V386.40M469.35 418.50V396.53M469.80 418.50V393.06M470.25 418.50V366.67M470.70 418.50V365.04M471.15 418.50V360.79M471.60 418.50V376.00M472.05 418.50V380.71M472.50 418.50V388.11M472.95 418.50V385.38M473.40 418.50V373.65M473.85 418.50V388.09M474.30 418.50V371.64M474.75 418.50V378.24M475.20 418.50V389.17M475.65 418.50V374.13M476.10 418.50V387.92M476.55 418.50V385.72M477.00 418.50V384.93M477.45 418.50V373.96M477.90 418.50V383.39M478.35 418.50V368.84M478.80 418.50V367.74M479.25 418.50V353.12M479.70 418.50V381.32M480.15 418.50V377.89M480.60 418.50V383.43M481.05 418.50V369.75M481.50 418.50V359.73M481.95 418.50V361.41M482.40 418.50V334.64M482.85 418.50V362.11M483.30 418.50V361.85M483.75 418.50V346.29M484.20 418.50V367.88M484.65 418.50V342.43M485.10 418.50V346.56M485.55 418.50V341.83M486.00 418.50V347.98M486.45 418.50V358.65M486.90 418.50V368.73M487.35 418.50V377.24M487.80 418.50V360.91M488.25 418.50V372.74M488.70 418.50V376.94M489.15 418.50V390.74M489.60 418.50V376.74M490.05 418.50V378.10M490.50 418.50V384.77M490.95 418.50V379.99M491.40 418.50V375.98M466.40 418.50V377.55M470.70 418.50V333.87M478.90 418.50V321.58M484.80 418.50V204.19M485.50 418.50V164.61M485.00 418.50V295.65M484.20 418.50V309.30M489.90 418.50V355.71M487.80 418.50V336.60M488.50 418.50V342.06M494.00 418.50V374.82M491.00 418.50V385.74M497.80 418.50V399.39M500.70 418.50V362.53M509.50 418.50V389.83M521.20 418.50V414.40M524.00 418.50V408.94M530.90 418.50V414.40M555.50 418.50V417.13M557.30 418.50V415.22M560.80 418.50V389.83M562.20 418.50V385.74M567.20 418.50V403.49M568.80 418.50V404.85M569.80 418.50V387.11M571.00 418.50V387.11"/>
<rect x="471.20" y="403.00" width="1.00" height="14.90" fill="#ffffff"/>
<rect x="477.60" y="406.00" width="1.00" height="11.90" fill="#ffffff"/>
<rect x="481.60" y="404.00" width="1.00" height="13.90" fill="#ffffff"/>
<rect x="474.00" y="412.00" width="1.00" height="5.90" fill="#ffffff"/>
<rect x="331.30" y="145.50" width="247.90" height="273.00" fill="none" stroke="#a0a0a0" stroke-width="1.2"/>
<line x1="325.80" y1="418.50" x2="328.60" y2="418.50" stroke="#707070" stroke-width="0.8"/>
<text x="324.30" y="420.90" font-size="6.6" fill="#606060" text-anchor="end" textLength="3.3" lengthAdjust="spacingAndGlyphs">0</text>
<line x1="325.80" y1="391.20" x2="328.60" y2="391.20" stroke="#707070" stroke-width="0.8"/>
<text x="324.30" y="393.60" font-size="6.6" fill="#606060" text-anchor="end" textLength="6.4" lengthAdjust="spacingAndGlyphs">10</text>
<line x1="325.80" y1="363.90" x2="328.60" y2="363.90" stroke="#707070" stroke-width="0.8"/>
<text x="324.30" y="366.30" font-size="6.6" fill="#606060" text-anchor="end" textLength="6.4" lengthAdjust="spacingAndGlyphs">20</text>
<line x1="325.80" y1="336.60" x2="328.60" y2="336.60" stroke="#707070" stroke-width="0.8"/>
<text x="324.30" y="339.00" font-size="6.6" fill="#606060" text-anchor="end" textLength="6.4" lengthAdjust="spacingAndGlyphs">30</text>
<line x1="325.80" y1="309.30" x2="328.60" y2="309.30" stroke="#707070" stroke-width="0.8"/>
<text x="324.30" y="311.70" font-size="6.6" fill="#606060" text-anchor="end" textLength="6.4" lengthAdjust="spacingAndGlyphs">40</text>
<line x1="325.80" y1="282.00" x2="328.60" y2="282.00" stroke="#707070" stroke-width="0.8"/>
<text x="324.30" y="284.40" font-size="6.6" fill="#606060" text-anchor="end" textLength="6.4" lengthAdjust="spacingAndGlyphs">50</text>
<line x1="325.80" y1="254.70" x2="328.60" y2="254.70" stroke="#707070" stroke-width="0.8"/>
<text x="324.30" y="257.10" font-size="6.6" fill="#606060" text-anchor="end" textLength="6.4" lengthAdjust="spacingAndGlyphs">60</text>
<line x1="325.80" y1="227.40" x2="328.60" y2="227.40" stroke="#707070" stroke-width="0.8"/>
<text x="324.30" y="229.80" font-size="6.6" fill="#606060" text-anchor="end" textLength="6.4" lengthAdjust="spacingAndGlyphs">70</text>
<line x1="325.80" y1="200.10" x2="328.60" y2="200.10" stroke="#707070" stroke-width="0.8"/>
<text x="324.30" y="202.50" font-size="6.6" fill="#606060" text-anchor="end" textLength="6.4" lengthAdjust="spacingAndGlyphs">80</text>
<line x1="325.80" y1="172.80" x2="328.60" y2="172.80" stroke="#707070" stroke-width="0.8"/>
<text x="324.30" y="175.20" font-size="6.6" fill="#606060" text-anchor="end" textLength="6.4" lengthAdjust="spacingAndGlyphs">90</text>
<line x1="325.80" y1="145.50" x2="328.60" y2="145.50" stroke="#707070" stroke-width="0.8"/>
<text x="324.30" y="147.90" font-size="6.6" fill="#606060" text-anchor="end" textLength="9.7" lengthAdjust="spacingAndGlyphs">100</text>
<text x="303.70" y="139.30" font-size="6.6" fill="#606060" text-anchor="start">dB</text>
<line x1="331.30" y1="420.80" x2="331.30" y2="423.40" stroke="#808080" stroke-width="0.8"/>
<line x1="346.80" y1="420.80" x2="346.80" y2="422.40" stroke="#808080" stroke-width="0.8"/>
<line x1="355.87" y1="420.80" x2="355.87" y2="422.40" stroke="#808080" stroke-width="0.8"/>
<line x1="362.31" y1="420.80" x2="362.31" y2="422.40" stroke="#808080" stroke-width="0.8"/>
<line x1="367.30" y1="420.80" x2="367.30" y2="422.40" stroke="#808080" stroke-width="0.8"/>
<line x1="371.37" y1="420.80" x2="371.37" y2="422.40" stroke="#808080" stroke-width="0.8"/>
<line x1="374.82" y1="420.80" x2="374.82" y2="422.40" stroke="#808080" stroke-width="0.8"/>
<line x1="377.81" y1="420.80" x2="377.81" y2="422.40" stroke="#808080" stroke-width="0.8"/>
<line x1="380.44" y1="420.80" x2="380.44" y2="422.40" stroke="#808080" stroke-width="0.8"/>
<line x1="382.80" y1="420.80" x2="382.80" y2="423.40" stroke="#808080" stroke-width="0.8"/>
<line x1="398.30" y1="420.80" x2="398.30" y2="422.40" stroke="#808080" stroke-width="0.8"/>
<line x1="407.37" y1="420.80" x2="407.37" y2="422.40" stroke="#808080" stroke-width="0.8"/>
<line x1="413.81" y1="420.80" x2="413.81" y2="422.40" stroke="#808080" stroke-width="0.8"/>
<line x1="418.80" y1="420.80" x2="418.80" y2="422.40" stroke="#808080" stroke-width="0.8"/>
<line x1="422.87" y1="420.80" x2="422.87" y2="422.40" stroke="#808080" stroke-width="0.8"/>
<line x1="426.32" y1="420.80" x2="426.32" y2="422.40" stroke="#808080" stroke-width="0.8"/>
<line x1="429.31" y1="420.80" x2="429.31" y2="422.40" stroke="#808080" stroke-width="0.8"/>
<line x1="431.94" y1="420.80" x2="431.94" y2="422.40" stroke="#808080" stroke-width="0.8"/>
<line x1="434.30" y1="420.80" x2="434.30" y2="423.40" stroke="#808080" stroke-width="0.8"/>
<line x1="449.80" y1="420.80" x2="449.80" y2="422.40" stroke="#808080" stroke-width="0.8"/>
<line x1="458.87" y1="420.80" x2="458.87" y2="422.40" stroke="#808080" stroke-width="0.8"/>
<line x1="465.31" y1="420.80" x2="465.31" y2="422.40" stroke="#808080" stroke-width="0.8"/>
<line x1="470.30" y1="420.80" x2="470.30" y2="422.40" stroke="#808080" stroke-width="0.8"/>
<line x1="474.37" y1="420.80" x2="474.37" y2="422.40" stroke="#808080" stroke-width="0.8"/>
<line x1="477.82" y1="420.80" x2="477.82" y2="422.40" stroke="#808080" stroke-width="0.8"/>
<line x1="480.81" y1="420.80" x2="480.81" y2="422.40" stroke="#808080" stroke-width="0.8"/>
<line x1="483.44" y1="420.80" x2="483.44" y2="422.40" stroke="#808080" stroke-width="0.8"/>
<line x1="485.80" y1="420.80" x2="485.80" y2="423.40" stroke="#808080" stroke-width="0.8"/>
<line x1="501.30" y1="420.80" x2="501.30" y2="422.40" stroke="#808080" stroke-width="0.8"/>
<line x1="510.37" y1="420.80" x2="510.37" y2="422.40" stroke="#808080" stroke-width="0.8"/>
<line x1="516.81" y1="420.80" x2="516.81" y2="422.40" stroke="#808080" stroke-width="0.8"/>
<line x1="521.80" y1="420.80" x2="521.80" y2="422.40" stroke="#808080" stroke-width="0.8"/>
<line x1="525.87" y1="420.80" x2="525.87" y2="422.40" stroke="#808080" stroke-width="0.8"/>
<line x1="529.32" y1="420.80" x2="529.32" y2="422.40" stroke="#808080" stroke-width="0.8"/>
<line x1="532.31" y1="420.80" x2="532.31" y2="422.40" stroke="#808080" stroke-width="0.8"/>
<line x1="534.94" y1="420.80" x2="534.94" y2="422.40" stroke="#808080" stroke-width="0.8"/>
<line x1="537.30" y1="420.80" x2="537.30" y2="423.40" stroke="#808080" stroke-width="0.8"/>
<line x1="552.80" y1="420.80" x2="552.80" y2="422.40" stroke="#808080" stroke-width="0.8"/>
<line x1="561.87" y1="420.80" x2="561.87" y2="422.40" stroke="#808080" stroke-width="0.8"/>
<line x1="568.31" y1="420.80" x2="568.31" y2="422.40" stroke="#808080" stroke-width="0.8"/>
<line x1="573.30" y1="420.80" x2="573.30" y2="422.40" stroke="#808080" stroke-width="0.8"/>
<line x1="577.37" y1="420.80" x2="577.37" y2="422.40" stroke="#808080" stroke-width="0.8"/>
<text x="323.30" y="431.0" font-size="6.4" fill="#5a5a5a">1·10<tspan font-size="3.6" dy="-3">0</tspan></text>
<text x="374.80" y="431.0" font-size="6.4" fill="#5a5a5a">1·10<tspan font-size="3.6" dy="-3">1</tspan></text>
<text x="426.30" y="431.0" font-size="6.4" fill="#5a5a5a">1·10<tspan font-size="3.6" dy="-3">2</tspan></text>
<text x="477.80" y="431.0" font-size="6.4" fill="#5a5a5a">1·10<tspan font-size="3.6" dy="-3">3</tspan></text>
<text x="529.30" y="431.0" font-size="6.4" fill="#5a5a5a">1·10<tspan font-size="3.6" dy="-3">4</tspan></text>
<text x="577.80" y="442.20" font-size="6.6" fill="#606060" text-anchor="end">Hz</text>
<line x1="635.37" y1="145.50" x2="635.37" y2="418.50" stroke="#f1f1f1" stroke-width="1"/>
<line x1="642.54" y1="145.50" x2="642.54" y2="418.50" stroke="#f1f1f1" stroke-width="1"/>
<line x1="649.71" y1="145.50" x2="649.71" y2="418.50" stroke="#dcdcdc" stroke-width="1"/>
<line x1="656.88" y1="145.50" x2="656.88" y2="418.50" stroke="#f1f1f1" stroke-width="1"/>
<line x1="664.05" y1="145.50" x2="664.05" y2="418.50" stroke="#f1f1f1" stroke-width="1"/>
<line x1="671.22" y1="145.50" x2="671.22" y2="418.50" stroke="#dcdcdc" stroke-width="1"/>
<line x1="678.39" y1="145.50" x2="678.39" y2="418.50" stroke="#f1f1f1" stroke-width="1"/>
<line x1="685.56" y1="145.50" x2="685.56" y2="418.50" stroke="#f1f1f1" stroke-width="1"/>
<line x1="692.73" y1="145.50" x2="692.73" y2="418.50" stroke="#dcdcdc" stroke-width="1"/>
<line x1="699.90" y1="145.50" x2="699.90" y2="418.50" stroke="#f1f1f1" stroke-width="1"/>
<line x1="707.07" y1="145.50" x2="707.07" y2="418.50" stroke="#f1f1f1" stroke-width="1"/>
<line x1="714.24" y1="145.50" x2="714.24" y2="418.50" stroke="#dcdcdc" stroke-width="1"/>
<line x1="721.41" y1="145.50" x2="721.41" y2="418.50" stroke="#f1f1f1" stroke-width="1"/>
<line x1="728.58" y1="145.50" x2="728.58" y2="418.50" stroke="#f1f1f1" stroke-width="1"/>
<line x1="735.75" y1="145.50" x2="735.75" y2="418.50" stroke="#dcdcdc" stroke-width="1"/>
<line x1="742.92" y1="145.50" x2="742.92" y2="418.50" stroke="#f1f1f1" stroke-width="1"/>
<line x1="750.09" y1="145.50" x2="750.09" y2="418.50" stroke="#f1f1f1" stroke-width="1"/>
<line x1="757.26" y1="145.50" x2="757.26" y2="418.50" stroke="#dcdcdc" stroke-width="1"/>
<line x1="764.43" y1="145.50" x2="764.43" y2="418.50" stroke="#f1f1f1" stroke-width="1"/>
<line x1="771.60" y1="145.50" x2="771.60" y2="418.50" stroke="#f1f1f1" stroke-width="1"/>
<line x1="778.77" y1="145.50" x2="778.77" y2="418.50" stroke="#dcdcdc" stroke-width="1"/>
<line x1="785.94" y1="145.50" x2="785.94" y2="418.50" stroke="#f1f1f1" stroke-width="1"/>
<line x1="793.11" y1="145.50" x2="793.11" y2="418.50" stroke="#f1f1f1" stroke-width="1"/>
<line x1="800.28" y1="145.50" x2="800.28" y2="418.50" stroke="#dcdcdc" stroke-width="1"/>
<line x1="807.45" y1="145.50" x2="807.45" y2="418.50" stroke="#f1f1f1" stroke-width="1"/>
<line x1="814.62" y1="145.50" x2="814.62" y2="418.50" stroke="#f1f1f1" stroke-width="1"/>
<line x1="821.79" y1="145.50" x2="821.79" y2="418.50" stroke="#dcdcdc" stroke-width="1"/>
<line x1="828.96" y1="145.50" x2="828.96" y2="418.50" stroke="#f1f1f1" stroke-width="1"/>
<line x1="836.13" y1="145.50" x2="836.13" y2="418.50" stroke="#f1f1f1" stroke-width="1"/>
<line x1="843.30" y1="145.50" x2="843.30" y2="418.50" stroke="#dcdcdc" stroke-width="1"/>
<line x1="850.47" y1="145.50" x2="850.47" y2="418.50" stroke="#f1f1f1" stroke-width="1"/>
<line x1="857.64" y1="145.50" x2="857.64" y2="418.50" stroke="#f1f1f1" stroke-width="1"/>
<line x1="864.81" y1="145.50" x2="864.81" y2="418.50" stroke="#dcdcdc" stroke-width="1"/>
<line x1="871.98" y1="145.50" x2="871.98" y2="418.50" stroke="#f1f1f1" stroke-width="1"/>
<line x1="879.15" y1="145.50" x2="879.15" y2="418.50" stroke="#f1f1f1" stroke-width="1"/>
<line x1="628.20" y1="391.20" x2="886.20" y2="391.20" stroke="#dcdcdc" stroke-width="1"/>
<line x1="628.20" y1="363.90" x2="886.20" y2="363.90" stroke="#dcdcdc" stroke-width="1"/>
<line x1="628.20" y1="336.60" x2="886.20" y2="336.60" stroke="#dcdcdc" stroke-width="1"/>
<line x1="628.20" y1="309.30" x2="886.20" y2="309.30" stroke="#dcdcdc" stroke-width="1"/>
<line x1="628.20" y1="282.00" x2="886.20" y2="282.00" stroke="#dcdcdc" stroke-width="1"/>
<line x1="628.20" y1="254.70" x2="886.20" y2="254.70" stroke="#dcdcdc" stroke-width="1"/>
<line x1="628.20" y1="227.40" x2="886.20" y2="227.40" stroke="#dcdcdc" stroke-width="1"/>
<line x1="628.20" y1="200.10" x2="886.20" y2="200.10" stroke="#dcdcdc" stroke-width="1"/>
<line x1="628.20" y1="172.80" x2="886.20" y2="172.80" stroke="#dcdcdc" stroke-width="1"/>
<rect x="742.80" y="331.69" width="6.30" height="86.81" fill="#00438a"/>
<rect x="749.90" y="330.59" width="6.30" height="87.91" fill="#00438a"/>
<rect x="757.50" y="232.31" width="6.30" height="186.19" fill="#00438a"/>
<rect x="764.30" y="164.34" width="6.30" height="254.16" fill="#00438a"/>
<rect x="771.40" y="226.58" width="6.30" height="191.92" fill="#00438a"/>
<rect x="778.50" y="294.83" width="6.30" height="123.67" fill="#00438a"/>
<rect x="785.60" y="333.60" width="6.30" height="84.90" fill="#00438a"/>
<rect x="628.20" y="145.50" width="258.00" height="273.00" fill="none" stroke="#a0a0a0" stroke-width="1.2"/>
<line x1="622.60" y1="336.60" x2="625.40" y2="336.60" stroke="#707070" stroke-width="0.8"/>
<text x="621.00" y="339.00" font-size="6.6" fill="#606060" text-anchor="end" textLength="6.4" lengthAdjust="spacingAndGlyphs">30</text>
<line x1="622.60" y1="309.30" x2="625.40" y2="309.30" stroke="#707070" stroke-width="0.8"/>
<text x="621.00" y="311.70" font-size="6.6" fill="#606060" text-anchor="end" textLength="6.4" lengthAdjust="spacingAndGlyphs">40</text>
<line x1="622.60" y1="282.00" x2="625.40" y2="282.00" stroke="#707070" stroke-width="0.8"/>
<text x="621.00" y="284.40" font-size="6.6" fill="#606060" text-anchor="end" textLength="6.4" lengthAdjust="spacingAndGlyphs">50</text>
<line x1="622.60" y1="254.70" x2="625.40" y2="254.70" stroke="#707070" stroke-width="0.8"/>
<text x="621.00" y="257.10" font-size="6.6" fill="#606060" text-anchor="end" textLength="6.4" lengthAdjust="spacingAndGlyphs">60</text>
<line x1="622.60" y1="227.40" x2="625.40" y2="227.40" stroke="#707070" stroke-width="0.8"/>
<text x="621.00" y="229.80" font-size="6.6" fill="#606060" text-anchor="end" textLength="6.4" lengthAdjust="spacingAndGlyphs">70</text>
<line x1="622.60" y1="200.10" x2="625.40" y2="200.10" stroke="#707070" stroke-width="0.8"/>
<text x="621.00" y="202.50" font-size="6.6" fill="#606060" text-anchor="end" textLength="6.4" lengthAdjust="spacingAndGlyphs">80</text>
<line x1="622.60" y1="172.80" x2="625.40" y2="172.80" stroke="#707070" stroke-width="0.8"/>
<text x="621.00" y="175.20" font-size="6.6" fill="#606060" text-anchor="end" textLength="6.4" lengthAdjust="spacingAndGlyphs">90</text>
<line x1="622.60" y1="145.50" x2="625.40" y2="145.50" stroke="#707070" stroke-width="0.8"/>
<text x="621.00" y="147.90" font-size="6.6" fill="#606060" text-anchor="end" textLength="9.7" lengthAdjust="spacingAndGlyphs">100</text>
<text x="601.00" y="139.30" font-size="6.6" fill="#606060" text-anchor="start">dB</text>
</svg>
<span class="t" style="left:411.70px;top:6.40px;font-size:7.8px;color:#333;font-weight:bold;transform:scaleX(0.8911);">imc WAVE Kalibrierung</span><span class="t" style="left:68.80px;top:28.04px;font-size:7.4px;color:#404040;transform:scaleX(0.9409);">Übersteuerung</span><span class="t" style="left:68.80px;top:39.84px;font-size:7.4px;color:#404040;transform:scaleX(0.9488);">Unterschreitung</span><span class="t" style="left:172.50px;top:28.11px;font-size:19.6px;color:#3a3a3a;transform:scaleX(0.8794);">93.2 dB</span><span class="t" style="left:257.70px;top:28.11px;font-size:19.6px;color:#3a3a3a;transform:scaleX(0.8291);">Mic1</span><span class="t" style="left:7.30px;top:58.90px;font-size:7.8px;color:#4a4a4a;transform:scaleX(0.8799);">Name</span><span class="t" style="left:77.60px;top:58.90px;font-size:7.8px;color:#4a4a4a;transform:scaleX(0.8881);">Skalierungsfaktor</span><span class="t" style="left:148.50px;top:58.90px;font-size:7.8px;color:#4a4a4a;transform:scaleX(0.8694);">Neuer Skalierungsf...</span><span class="t" style="left:219.10px;top:58.90px;font-size:7.8px;color:#4a4a4a;transform:scaleX(0.8767);">Frequenzbewertung</span><span class="t" style="left:289.60px;top:58.90px;font-size:7.8px;color:#4a4a4a;transform:scaleX(0.8735);">Referenzwert</span><span class="t" style="left:360.20px;top:58.90px;font-size:7.8px;color:#4a4a4a;transform:scaleX(0.8660);">Messdauer</span><span class="t" style="left:430.60px;top:58.90px;font-size:7.8px;color:#4a4a4a;transform:scaleX(0.8656);">Referenzpegel</span><span class="t" style="left:500.90px;top:58.90px;font-size:7.8px;color:#4a4a4a;transform:scaleX(0.8555);">Gemessener Pegel</span><span class="t" style="left:571.60px;top:58.90px;font-size:7.8px;color:#4a4a4a;transform:scaleX(0.8745);">Referenzfrequenz</span><span class="t" style="left:642.40px;top:58.90px;font-size:7.8px;color:#4a4a4a;transform:scaleX(0.8305);">Bandpass</span><span class="t" style="left:771.30px;top:58.90px;font-size:7.8px;color:#4a4a4a;transform:scaleX(0.8746);">Zeige Signale</span><span class="t" style="left:6.20px;top:72.80px;font-size:7.8px;color:#ffffff;transform:scaleX(0.8808);">Mic1</span><span class="t" style="left:6.20px;top:88.80px;font-size:7.8px;color:#3a3a3a;transform:scaleX(0.8991);">Mic2</span><span class="t" style="left:77.00px;top:72.80px;font-size:7.8px;color:#3a3a3a;transform:scaleX(0.8424);">19.92 Pa/V</span><span class="t" style="left:77.00px;top:88.80px;font-size:7.8px;color:#3a3a3a;transform:scaleX(0.8424);">19.94 Pa/V</span><span class="t" style="left:148.60px;top:72.80px;font-size:7.8px;color:#ffffff;transform:scaleX(0.8211);">21.7954 Pa/V</span><span class="t" style="left:220.40px;top:72.80px;font-size:7.8px;color:#3a3a3a;transform:scaleX(0.9029);">Z</span><span class="t" style="left:290.60px;top:72.80px;font-size:7.8px;color:#3a3a3a;transform:scaleX(0.8429);">2E-05 Pa</span><span class="t" style="left:361.30px;top:72.80px;font-size:7.8px;color:#3a3a3a;transform:scaleX(0.8749);">3 s</span><span class="t" style="left:432.20px;top:72.80px;font-size:7.8px;color:#3a3a3a;transform:scaleX(0.8638);">94 dB</span><span class="t" style="left:573.30px;top:72.80px;font-size:7.8px;color:#3a3a3a;transform:scaleX(0.8505);">1000 Hz</span><span class="t" style="left:220.40px;top:88.80px;font-size:7.8px;color:#3a3a3a;transform:scaleX(0.9029);">Z</span><span class="t" style="left:290.60px;top:88.80px;font-size:7.8px;color:#3a3a3a;transform:scaleX(0.8429);">2E-05 Pa</span><span class="t" style="left:361.30px;top:88.80px;font-size:7.8px;color:#3a3a3a;transform:scaleX(0.8749);">3 s</span><span class="t" style="left:432.20px;top:88.80px;font-size:7.8px;color:#3a3a3a;transform:scaleX(0.8638);">94 dB</span><span class="t" style="left:573.30px;top:88.80px;font-size:7.8px;color:#3a3a3a;transform:scaleX(0.8505);">1000 Hz</span><span class="t" style="left:499.60px;top:72.80px;font-size:7.8px;color:#ffffff;transform:scaleX(0.8632);">93.2 dB</span><span class="t" style="left:653.10px;top:72.80px;font-size:7.8px;color:#ffffff;transform:scaleX(0.8971);">Aktiv - 600 Hz - 1400 Hz</span><span class="t" style="left:653.10px;top:88.80px;font-size:7.8px;color:#3a3a3a;transform:scaleX(0.8971);">Aktiv - 600 Hz - 1400 Hz</span><span class="t" style="left:782.50px;top:72.80px;font-size:7.8px;color:#ffffff;transform:scaleX(0.9296);">Aktiv - Aktiv - Aktiv</span><span class="t" style="left:782.50px;top:88.80px;font-size:7.8px;color:#3a3a3a;transform:scaleX(0.9296);">Aktiv - Aktiv - Aktiv</span><span class="t" style="left:17.60px;top:105.44px;font-size:7.4px;color:#404040;transform:scaleX(0.9453);">Zeitsignal</span><span class="t" style="left:116.70px;top:105.44px;font-size:7.4px;color:#404040;transform:scaleX(0.8344);">RMS_T</span><span class="t" style="left:216.00px;top:105.44px;font-size:7.4px;color:#404040;transform:scaleX(0.8667);">LeqT</span><span class="t" style="left:315.00px;top:105.44px;font-size:7.4px;color:#404040;transform:scaleX(0.7669);">FFT_Z</span><span class="t" style="left:612.10px;top:105.44px;font-size:7.4px;color:#404040;transform:scaleX(0.8105);">TO_Z</span><span class="t" style="left:26.00px;top:119.57px;font-size:7.0px;color:#3c3ca8;transform:scaleX(0.8710);">Mic1_TimeSignal_RMS_T_Z</span><span class="t" style="left:26.00px;top:127.77px;font-size:7.0px;color:#3c3ca8;transform:scaleX(0.8779);">Mic1_TimeSignal_L_ZeqT</span><span class="t" style="left:129.80px;top:119.57px;font-size:7.0px;color:#3c3ca8;transform:scaleX(0.8799);">Mic1_TimeSignal_Z</span><span class="t" style="left:323.00px;top:119.77px;font-size:7.0px;color:#3c3ca8;transform:scaleX(0.8746);">Mic1_TimeSignal_FFT_Z [3]</span><span class="t" style="left:620.20px;top:119.97px;font-size:7.0px;color:#3c3ca8;transform:scaleX(0.8927);">Mic1_TimeSignal_ThirdOctaves_L_ZeqT [30]</span>
<!-- dialog -->
<div class="b" style="left:588px;top:341px;width:436px;height:292px;background:#f7f7f7;border:1px solid #0b3275;border-left-width:2px;border-top:2px solid #0d3a80;"></div>
<div class="b" style="left:704.7px;top:589.3px;width:99.2px;height:26.8px;background:#fdfdfd;border:1px solid #adadad;"></div>
<div class="b" style="left:815px;top:589.3px;width:81.6px;height:26.8px;background:#fdfdfd;border:1px solid #adadad;"></div>
<div class="b" style="left:907.8px;top:589.3px;width:97.6px;height:26.8px;background:#fdfdfd;border:1px solid #adadad;"></div>
<svg width="1024" height="634" style="position:absolute;left:0;top:0">
<defs>
<radialGradient id="qb" cx="0.5" cy="0.6" r="0.55"><stop offset="0" stop-color="#2d62d8"/><stop offset="0.7" stop-color="#1240b0"/><stop offset="1" stop-color="#0a2a86"/></radialGradient>
<radialGradient id="qs" cx="0.5" cy="0.5" r="0.5"><stop offset="0" stop-color="#000" stop-opacity="0.35"/><stop offset="1" stop-color="#000" stop-opacity="0"/></radialGradient>
</defs>
<ellipse cx="633" cy="441" rx="16" ry="4" fill="url(#qs)"/>
<circle cx="633" cy="421.3" r="19" fill="url(#qb)"/>
<ellipse cx="633" cy="412.5" rx="13" ry="9" fill="#ffffff" opacity="0.18"/>
<path d="M627.6 416.2 Q627.2 409.3 634.2 409.3 Q641.2 409.5 641.2 414.8 Q641.2 418.2 636.6 420.6 Q633.6 422.2 633.6 426.2" fill="none" stroke="#fff" stroke-width="4.3" stroke-linecap="butt"/>
<circle cx="632.9" cy="432.6" r="3.1" fill="#fff"/>
<path d="M993.3 355.5 L1003.7 365.7 M1003.7 355.5 L993.3 365.7" stroke="#404040" stroke-width="1.3"/>
</svg>
<span class="t" style="left:717.20px;top:354.63px;font-size:12.6px;color:#404040;font-weight:bold;transform:scaleX(1.0014);">Kanalindividuelle Kalibrierung</span><span class="t" style="left:680.60px;top:417.73px;font-size:12.6px;color:#505050;transform:scaleX(1.0172);">Folgende Werte wurden für Kanal "Mic1" ermittelt:</span><span class="t" style="left:731.70px;top:451.77px;font-size:12.2px;color:#555555;transform:scaleX(0.9642);">Gemess. Pegel:</span><span class="t" style="left:834.30px;top:451.77px;font-size:12.2px;color:#222222;transform:scaleX(0.9838);">93.83 dB</span><span class="t" style="left:731.70px;top:468.77px;font-size:12.2px;color:#555555;">Faktor:</span><span class="t" style="left:834.30px;top:468.77px;font-size:12.2px;color:#222222;transform:scaleX(0.9910);">19.9203 Pa/V</span><span class="t" style="left:731.70px;top:502.57px;font-size:12.2px;color:#555555;">Referenzpegel:</span><span class="t" style="left:834.30px;top:502.57px;font-size:12.2px;color:#222222;">94 dB</span><span class="t" style="left:731.70px;top:519.57px;font-size:12.2px;color:#555555;">Neuer Faktor:</span><span class="t" style="left:834.30px;top:519.57px;font-size:12.2px;color:#222222;transform:scaleX(0.9910);">20.3075 Pa/V</span><span class="t" style="left:680.60px;top:554.63px;font-size:12.6px;color:#505050;transform:scaleX(1.0017);">Möchten Sie den Skalierungsfaktor übernehmen?</span><span class="t" style="left:717.50px;top:596.63px;font-size:12.6px;color:#404040;transform:scaleX(1.0026);">Übernehmen</span><span class="t" style="left:827.50px;top:596.63px;font-size:12.6px;color:#404040;transform:scaleX(0.9929);">Verwerfen</span><span class="t" style="left:920.60px;top:596.63px;font-size:12.6px;color:#404040;transform:scaleX(1.0183);">Wiederholen</span>
</body></html>
